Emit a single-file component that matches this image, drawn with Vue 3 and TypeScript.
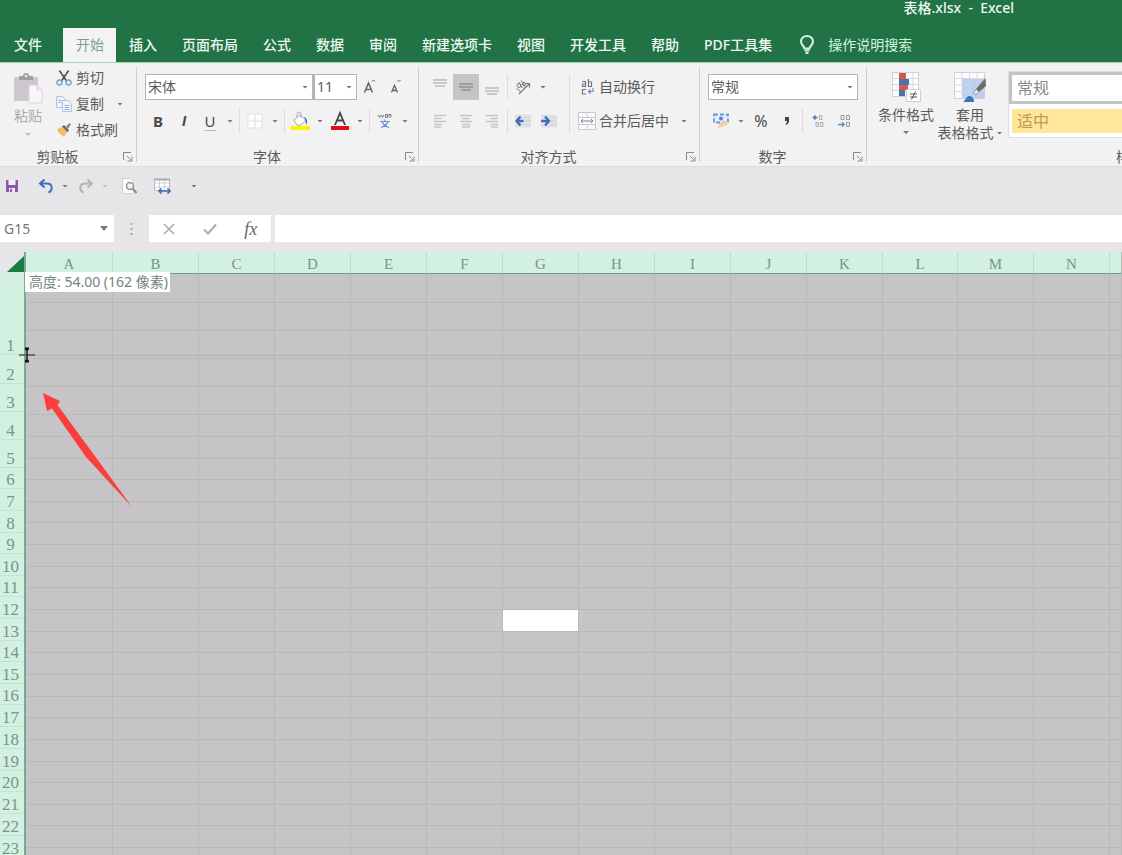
<script setup lang="ts">
import { ref } from 'vue'

const tabs: string[] = ['文件', '开始', '插入', '页面布局', '公式', '数据', '审阅', '新建选项卡', '视图', '开发工具', '帮助', 'PDF工具集']
const activeTab = ref('开始')
const fontName = ref('宋体')
const fontSize = ref('11')
const numberFormat = ref('常规')
const cellRef = ref('G15')
const formula = ref('')

interface Column { name: string; width: number }
const columnWidths: number[] = [87, 86, 76, 76, 76, 76, 76, 76, 76, 76, 76, 75, 76, 76]
const columns: Column[] = columnWidths.map((width, i) => ({ name: String.fromCharCode(65 + i), width }))

const rowHeights: number[] = [29, 28, 28, 28, 28, 22, 22, 21, 22, 21, 22, 22, 21, 22, 22, 21, 22, 22, 21, 22, 22, 21, 22, 21, 22, 22]
const headerHeights: number[] = [82, 29, 28, 28, 28, 21, 22, 22, 21, 22, 21, 22, 22, 21, 22, 21, 22, 22, 22, 21, 22, 22, 22]
const isActive = (row: number, col: number): boolean => row === 14 && col === 6
</script>

<template>
  <div class="window">
    <header class="titlebar">
      <div class="title">表格.xlsx&nbsp; -&nbsp; Excel</div>
      <nav class="tabs">
        <button v-for="t in tabs" :key="t" class="tab" :class="{ active: t === activeTab }" @click="activeTab = t">{{ t }}</button>
        <button class="tell">
          <svg width="16" height="20" viewBox="0 0 16 20" fill="none" stroke="#d3f3df" stroke-width="2">
            <path d="M5.5 13.5c0-2-3.5-3.500-3.500-7a6 5.500 0 0 1 12 0c0 3.500-3.500 5-3.500 7z" />
            <path d="M5.500 15.500h5M6.500 18h3" />
          </svg>
          <span>操作说明搜索</span>
        </button>
      </nav>
    </header>

    <section class="ribbon">
      <div class="group">
        <div class="group-body clip-body">
          <button class="big paste">
            <svg width="32" height="32" viewBox="0 0 32 32">
              <path d="M2 5h24v24H2z" fill="#cdc7ce" />
              <path d="M7 4h4a3 3 0 0 1 6 0h4v4H7z" fill="#a29da2" />
              <circle cx="14" cy="4" r="1.300" fill="#eee" />
              <path d="M17 13h8l5 5v13H17z" fill="#faf4fb" stroke="#dccfe0" />
              <path d="M25 13v5h5" fill="#efe4f1" stroke="#dccfe0" />
            </svg>
            <span>粘贴</span>
            <i class="caret light"></i>
          </button>
          <div class="clip-list">
            <button class="line">
              <svg width="16" height="16" viewBox="0 0 16 16" fill="none">
                <path d="M3.500 0.500 10.500 11M12.500 0.500 5.500 11" stroke="#555" stroke-width="1.700" />
                <circle cx="3.500" cy="12.500" r="2.500" stroke="#7fa3d6" stroke-width="1.500" />
                <circle cx="12.500" cy="12.500" r="2.500" stroke="#7fa3d6" stroke-width="1.500" />
              </svg>
              <span>剪切</span>
            </button>
            <button class="line">
              <svg width="16" height="16" viewBox="0 0 16 16" fill="#eef2fb" stroke="#b4c3e4">
                <path d="M.5.5h6l2.500 2.500v8.500H.5z" />
                <path d="M6.500 4.500h6l3 3v8h-9z" />
                <path d="M2.500 4.500h3M2.500 6.500h3M8.500 9.500h5M8.500 11.500h5M8.500 13.500h5" stroke="#9cb3de" />
              </svg>
              <span>复制</span>
              <i class="caret copy-caret"></i>
            </button>
            <button class="line">
              <svg width="16" height="16" viewBox="0 0 16 16">
                <path d="M1 7l5-2 5 5-3 5c-3-2-6-4-7-8z" fill="#f3bd63" />
                <path d="M6 4.500 8 3l5 5-1.500 2.500z" fill="#6f6a68" />
                <path d="M10 4.500 13.500 1 15 2.500 12 6.500z" fill="#8a8583" />
              </svg>
              <span>格式刷</span>
            </button>
          </div>
        </div>
        <footer class="group-foot"><span>剪贴板</span><button class="launch" aria-label="剪贴板选项"><svg width="10" height="10" viewBox="0 0 10 10" fill="none" stroke="#8a8a8a"><path d="M.5 8V.5H8M4 4l4.500 4.500M9 4.500V9H4.500" /></svg></button></footer>
      </div>

      <div class="group">
        <div class="group-body stack">
          <div class="row">
            <label class="combo font-name"><select v-model="fontName" aria-label="字体"><option>宋体</option></select><i class="caret"></i></label>
            <label class="combo font-size"><select v-model="fontSize" aria-label="字号"><option>11</option></select><i class="caret"></i></label>
            <button class="ic" aria-label="增大字号">
              <svg width="16" height="18" viewBox="0 0 16 18" fill="none" stroke="#666"><path d="M2.500 14.500 6.500 5l4 9.500M4 11.500h5" stroke-width="1.500" /><path d="M10 3.500 11.500 2 13 3.500" /></svg>
            </button>
            <button class="ic" aria-label="减小字号">
              <svg width="16" height="18" viewBox="0 0 16 18" fill="none" stroke="#666"><path d="M3.500 14.500 6.500 7.500l3 7M4.500 12.500h4" stroke-width="1.300" /><path d="M9.500 2 11 3.500 12.500 2" /></svg>
            </button>
          </div>
          <div class="row">
            <button class="ic glyph bold">B</button>
            <button class="ic glyph italic">I</button>
            <button class="ic glyph under">U</button>
            <button class="drop" aria-label="下划线选项"><i class="caret"></i></button>
            <i class="sep"></i>
            <button class="ic" aria-label="边框">
              <svg width="16" height="16" viewBox="0 0 16 16"><path d="M1 1h14v14H1z" fill="#fefefe" stroke="#e2e2e2" /><path d="M8 1v14M1 8h14" stroke="#dcdcdc" /></svg>
            </button>
            <button class="drop" aria-label="边框选项"><i class="caret"></i></button>
            <i class="sep"></i>
            <button class="ic" aria-label="填充颜色">
              <svg width="20" height="20" viewBox="0 0 20 20"><path d="M1 15h19v4H1z" fill="#fff200" /><path d="M4 9l6-5 6 5-5 5H7z" fill="#fff" stroke="#aaa" /><path d="M7 7V3a2 2 0 0 1 4 0v4" fill="none" stroke="#aaa" /><path d="M14 6c3 1 4 4 2.500 8-1-2-1-5-2.500-8z" fill="#5876a4" /></svg>
            </button>
            <button class="drop" aria-label="填充颜色选项"><i class="caret"></i></button>
            <button class="ic" aria-label="字体颜色">
              <svg width="20" height="20" viewBox="0 0 20 20"><path d="M1 15h18v4H1z" fill="#e0101a" /><path d="M5 14 10 2l5 12M7 9.500h6" fill="none" stroke="#444" stroke-width="1.800" /></svg>
            </button>
            <button class="drop" aria-label="字体颜色选项"><i class="caret"></i></button>
            <i class="sep"></i>
            <button class="ic" aria-label="拼音指南">
              <svg width="16" height="16" viewBox="0 0 16 16" fill="none"><path d="M1 2l1.500 2.500L4 2l1.500 2.500L7 2M8.500 4.500V1.500h2v3h-2M12 4.500v-3h2v3" stroke="#777" /><path d="M3 8.500h10M8 6.500v2M5 8.500c1 3 4 5 7 6M11 8.500c-1 3-4 5-7 6" stroke="#6b8fd0" stroke-width="1.200" /></svg>
            </button>
            <button class="drop" aria-label="拼音选项"><i class="caret"></i></button>
          </div>
        </div>
        <footer class="group-foot"><span>字体</span><button class="launch" aria-label="字体选项"><svg width="10" height="10" viewBox="0 0 10 10" fill="none" stroke="#8a8a8a"><path d="M.5 8V.5H8M4 4l4.500 4.500M9 4.500V9H4.500" /></svg></button></footer>
      </div>

      <div class="group">
        <div class="group-body align-body">
          <div class="stack align-left">
            <div class="row">
              <button class="ic" aria-label="顶端对齐"><svg width="14" height="16" viewBox="0 0 14 16" stroke="#c8c8c8" stroke-width="2"><path d="M0 1h14M0 4h14M2 7h10" /></svg></button>
              <button class="ic pressed" aria-label="垂直居中"><svg width="14" height="16" viewBox="0 0 14 16" stroke="#9d9d9d" stroke-width="2"><path d="M0 5h14M0 8h14M2 11h10" /></svg></button>
              <button class="ic" aria-label="底端对齐"><svg width="14" height="16" viewBox="0 0 14 16" stroke="#c8c8c8" stroke-width="2"><path d="M0 9h14M0 12h14M2 15h10" /></svg></button>
              <i class="sep"></i>
              <button class="ic" aria-label="方向"><svg width="16" height="16" viewBox="0 0 16 16" fill="none" stroke="#777"><path d="M4 15 14 5M10.500 4.500h4v4" stroke-width="1.200" /><circle cx="4" cy="6.500" r="2" /><path d="M3.500 3 7.500 9M6 1.500l4.500 7M1.500 9.500l4 3" /><circle cx="9" cy="5" r="1.500" /></svg></button>
              <button class="drop" aria-label="方向选项"><i class="caret"></i></button>
            </div>
            <div class="row">
              <button class="ic" aria-label="左对齐"><svg width="14" height="14" viewBox="0 0 14 14" stroke="#c6c6c6" stroke-width="1.500"><path d="M1 1.500h12M1 4.500h8M1 7.500h12M1 10.500h8M1 13h7" /></svg></button>
              <button class="ic" aria-label="居中"><svg width="14" height="14" viewBox="0 0 14 14" stroke="#c6c6c6" stroke-width="1.500"><path d="M1 1.500h12M3 4.500h8M1 7.500h12M3 10.500h8M3 13h8" /></svg></button>
              <button class="ic" aria-label="右对齐"><svg width="14" height="14" viewBox="0 0 14 14" stroke="#c6c6c6" stroke-width="1.500"><path d="M1 1.500h12M5 4.500h8M1 7.500h12M5 10.500h8M6 13h7" /></svg></button>
              <i class="sep"></i>
              <button class="ic" aria-label="减少缩进"><svg width="16" height="14" viewBox="0 0 16 14"><path d="M0 .5h16v13H0z" fill="#e0e1e6" /><path d="M9 3.500h7M9 7h7M9 10.500h7" stroke="#d3d4da" /><path d="M5.500 2.500 1.500 7l4 4.500M1.500 7h7" fill="none" stroke="#3b6fb8" stroke-width="2.400" /></svg></button>
              <button class="ic" aria-label="增加缩进"><svg width="16" height="14" viewBox="0 0 16 14"><path d="M0 .5h16v13H0z" fill="#e0e1e6" /><path d="M9 3.500h7M9 7h7M9 10.500h7" stroke="#d3d4da" /><path d="M4 2.500 8 7l-4 4.500M0 7h8" fill="none" stroke="#3b6fb8" stroke-width="2.400" /></svg></button>
            </div>
          </div>
          <i class="tall-sep"></i>
          <div class="stack">
            <button class="line wrap-line">
              <svg width="18" height="16" viewBox="0 0 18 16" fill="none" stroke="#777" stroke-width="1.200"><path d="M4 2.500h3.500v5H4.500v-2.500h3M10.500 0v7.500h3v-4.500h-3" /><path d="M8 10.500H4.500v4.500H8" /><path d="M15 9v3.500h-4.500M12.500 10.500l-2 2 2 2" stroke="#6c8fd4" /></svg>
              <span>自动换行</span>
            </button>
            <button class="line wrap-line">
              <svg width="18" height="18" viewBox="0 0 18 18" fill="none"><path d="M.5.5h17v17H.5zM.5 5.500h17M.5 12.500h17M9 .5v5M9 12.500v5" fill="#fbfbfb" stroke="#c9c9cc" /><path d="M3 9h12M5 7 3 9l2 2M13 7l2 2-2 2" stroke="#6d83a8" /></svg>
              <span>合并后居中</span>
              <i class="caret merge-caret"></i>
            </button>
          </div>
        </div>
        <footer class="group-foot"><span>对齐方式</span><button class="launch" aria-label="对齐选项"><svg width="10" height="10" viewBox="0 0 10 10" fill="none" stroke="#8a8a8a"><path d="M.5 8V.5H8M4 4l4.500 4.500M9 4.500V9H4.500" /></svg></button></footer>
      </div>

      <div class="group">
        <div class="group-body stack">
          <div class="row">
            <label class="combo number"><select v-model="numberFormat" aria-label="数字格式"><option>常规</option></select><i class="caret"></i></label>
          </div>
          <div class="row">
            <button class="ic" aria-label="会计数字格式"><svg width="16" height="16" viewBox="0 0 16 16"><path d="M1 1.500h14v8H1z" fill="#e6edfa" stroke="#6f95d8" stroke-width="1.800" stroke-dasharray="4 2" /><circle cx="8" cy="5.500" r="2" fill="#5b80c4" /><path d="M6 11c2-2 6-3 9-2l-1 3c-3 0-5 3-9 3z" fill="#f4d0a0" /></svg></button>
            <button class="drop" aria-label="货币选项"><i class="caret"></i></button>
            <button class="ic glyph percent">%</button>
            <button class="ic" aria-label="千位分隔"><svg width="8" height="10" viewBox="0 0 8 10"><path d="M2 1h4v4c0 2-1.500 3.500-3 4L2.500 8c1-.5 1.500-1.500 1.500-3H2z" fill="#444" /></svg></button>
            <i class="sep"></i>
            <button class="ic" aria-label="增加小数位数"><svg width="14" height="14" viewBox="0 0 14 14" fill="none"><path d="M6.500 3.500H2M4.500 1.500l-2 2 2 2" stroke="#4f78c4" stroke-width="1.500" /><path d="M8.500 1.500h2.500v4H8.500zM5 8.500h2.500v4H5zM9.500 8.500H12v4H9.500z" stroke="#aaa" /></svg></button>
            <button class="ic" aria-label="减少小数位数"><svg width="14" height="14" viewBox="0 0 14 14" fill="none"><path d="M4 1.500h3v4H4zM9.500 1.500h3v4h-3zM9.500 8.500h3v4h-3z" stroke="#999" /><path d="M1 10.500h6M5 8.500l2 2-2 2" stroke="#5b8fc4" stroke-width="1.500" /></svg></button>
          </div>
        </div>
        <footer class="group-foot"><span>数字</span><button class="launch" aria-label="数字选项"><svg width="10" height="10" viewBox="0 0 10 10" fill="none" stroke="#8a8a8a"><path d="M.5 8V.5H8M4 4l4.500 4.500M9 4.500V9H4.500" /></svg></button></footer>
      </div>

      <div class="group styles">
        <div class="group-body styles-body">
          <button class="big cond">
            <svg width="30" height="32" viewBox="0 0 30 32">
              <path d="M1.500 1.500h26v24h-26z" fill="#fdfdfd" stroke="#cfcfd2" />
              <path d="M1.500 7.500h26M1.500 13.500h26M1.500 19.500h26M22 1.500v24" stroke="#d9d9dc" />
              <path d="M8 2h7v6H8zM8 14h9v5H8z" fill="#d25a4a" />
              <path d="M8 8h10v6H8zM8 19h6v6H8z" fill="#4b74ad" />
              <path d="M15.500 18.500h14v12h-14z" fill="#fff" stroke="#cfcfcf" />
              <path d="M19 23h7M19 26h7M24.500 20.500l-4 8" stroke="#555" />
            </svg>
            <span>条件格式</span>
            <i class="caret"></i>
          </button>
          <button class="big table-fmt">
            <svg width="34" height="32" viewBox="0 0 34 32">
              <path d="M1.500 1.500h30v26h-30z" fill="#fdfdfd" stroke="#cfcfd2" />
              <path d="M9 7h22v20H9z" fill="#bccfec" />
              <path d="M1.500 7.500h30M9 1.500v26M16.500 1.500v6M24 1.500v6M1.500 14H9M1.500 20.500H9" stroke="#d5dae6" />
              <path d="M9 14h22M9 20.500h22M16.500 7v20M24 7v20" stroke="#c9d7ee" />
              <path d="M32.500 7l.5 8-7 6-3-3z" fill="#6c6c70" />
              <path d="M23 18l3 3-3 3-3-2z" fill="#e6e2df" stroke="#999" />
              <path d="M10 31c2-1 3-5 6-6 3 0 5 2 5 6z" fill="#3f73b7" />
            </svg>
            <span>套用</span>
            <span class="with-caret">表格格式<i class="caret"></i></span>
          </button>
          <div class="gallery">
            <button class="style normal">常规</button>
            <button class="style neutral">适中</button>
          </div>
        </div>
        <footer class="group-foot"><span>样式</span><i class="launch"></i></footer>
      </div>
    </section>

    <section class="quick">
      <button class="qb" aria-label="保存"><svg width="14" height="14" viewBox="0 0 14 14"><path d="M1 1h12v12H1z" fill="#8b5aa8" /><path d="M3.500 1h7v5h-7z" fill="#f4eef7" /><path d="M4 9h6v4H4z" fill="#eee6f3" /><path d="M5 10h2v3H5z" fill="#8b5aa8" /></svg></button>
      <div class="row">
        <button class="qb" aria-label="撤消"><svg width="16" height="16" viewBox="0 0 16 16" fill="none" stroke="#3f6fb5" stroke-width="2"><path d="M6.500 1.500 2 5.500l4.500 4M2.500 5.500H9c6 0 6 7 1.500 9" /></svg></button>
        <button class="drop" aria-label="撤消列表"><i class="caret"></i></button>
      </div>
      <div class="row">
        <button class="qb" aria-label="恢复"><svg width="16" height="16" viewBox="0 0 16 16" fill="none" stroke="#b3b3b8" stroke-width="2"><path d="M9.500 1.500 14 5.500l-4.500 4M13.500 5.500H7c-6 0-6 7-1.500 9" /></svg></button>
        <button class="drop" aria-label="恢复列表"><i class="caret light"></i></button>
      </div>
      <button class="qb" aria-label="打印预览"><svg width="16" height="16" viewBox="0 0 16 16" fill="none"><path d="M1.500.5h8l3 3v12h-11z" fill="#fdfdfd" stroke="#cfcfd3" /><circle cx="9" cy="8" r="3.500" fill="#f1f1f4" stroke="#96969c" stroke-width="1.500" /><path d="M11.500 10.500l4 4.500" stroke="#8a8a90" stroke-width="2" /></svg></button>
      <button class="qb" aria-label="列宽"><svg width="18" height="16" viewBox="0 0 18 16" fill="none"><path d="M1.500 1.500h15v11h-15z" fill="#fff" stroke="#b9b9be" /><path d="M2 5h14M2 9h14M6.500 2v10M11.500 2v10" stroke="#d0d0d5" /><path d="M1 1.500h16" stroke="#a8a8ad" stroke-width="2" /><path d="M6 13h11M8.500 10.500 6 13l2.500 2.500M14.500 10.500 17 13l-2.500 2.500" stroke="#3f6fb5" stroke-width="1.600" /></svg></button>
      <button class="drop" aria-label="自定义快速访问工具栏"><i class="caret"></i></button>
    </section>

    <section class="formula">
      <div class="name-box">
        <input v-model="cellRef" aria-label="名称框" />
        <button class="name-drop" aria-label="名称列表"><svg width="8" height="5" viewBox="0 0 8 5"><path d="M0 0h8L4 5z" fill="#777" /></svg></button>
      </div>
      <div class="dots"><svg width="3" height="14" viewBox="0 0 3 14" fill="#a6a6aa"><path d="M.5 1h2v2h-2zM.5 6h2v2h-2zM.5 11h2v2h-2z" /></svg></div>
      <div class="fx-box">
        <button aria-label="取消"><svg width="12" height="12" viewBox="0 0 12 12" stroke="#ababaf" stroke-width="1.600"><path d="M1 1l10 10M11 1 1 11" /></svg></button>
        <button aria-label="输入"><svg width="14" height="12" viewBox="0 0 14 12" fill="none" stroke="#ababaf" stroke-width="2"><path d="M1 6.500 5 10.500 13 1.500" /></svg></button>
        <button class="fx">fx</button>
      </div>
      <input v-model="formula" class="formula-input" aria-label="编辑栏" />
    </section>

    <main class="sheet">
      <div class="side">
        <button class="corner" aria-label="全选"><svg width="17" height="16" viewBox="0 0 17 16"><path d="M17 0v16H0z" fill="#1b7a45" /></svg></button>
        <ol class="row-heads">
          <li v-for="(h, i) in headerHeights" :key="i" :style="{ height: h + 'px' }">{{ i + 1 }}</li>
        </ol>
      </div>
      <div class="cells">
        <table>
          <colgroup><col v-for="c in columns" :key="c.name" :style="{ width: c.width + 'px' }" /><col class="rest" /></colgroup>
          <thead><tr><th v-for="c in columns" :key="c.name" scope="col">{{ c.name }}</th><td class="head-rest"></td></tr></thead>
          <tbody>
            <tr v-for="(h, r) in rowHeights" :key="r" :style="{ height: h + 'px' }">
              <td v-for="(c, k) in columns" :key="c.name" :class="{ current: isActive(r, k) }"></td><td></td>
            </tr>
          </tbody>
        </table>
      </div>
      <div class="guide"></div>
      <div class="tip">高度: 54.00 (162 像素)</div>
      <svg class="cursor" width="16" height="18" viewBox="0 0 16 18"><path d="M0 9h16" stroke="#555" stroke-width="1.500" /><path d="M8 2v14" stroke="#222" stroke-width="1.500" /><path d="M6 1.500h4v2L8 5 6 3.500zM6 16.500h4v-2L8 13l-2 1.500z" fill="#111" /></svg>
      <svg class="arrow" width="92" height="116" viewBox="0 0 92 116"><path d="M1 0l17 8-2.500 4 42.500 58 32 44-46-50L10 15.500 5 18z" fill="#fb3e3c" /></svg>
    </main>
  </div>
</template>

<style>
body { margin: 0; }
</style>

<style scoped>
.window {
  height: 100vh;
  display: flex;
  flex-direction: column;
  overflow: hidden;
  background: #e6e6e8;
  color: #5c5c5c;
  font: 14px/20px "Noto Sans", "Noto Sans CJK SC", sans-serif;
}
.window * { box-sizing: border-box; }
button, input, select { font: inherit; color: inherit; border: 0; padding: 0; margin: 0; background: none; border-radius: 0; }
button { display: flex; align-items: center; justify-content: center; white-space: nowrap; }
svg { display: block; flex: none; }
i { font-style: normal; }

.titlebar { background: #217346; color: #eef8f1; }
.title { height: 28px; line-height: 16px; padding-right: 108px; text-align: right; font-weight: 500; }
.tabs { display: flex; height: 34px; }
.tab { padding: 0 12px 0 13px; font-weight: 500; }
.tab:first-child { padding: 0 21px 0 14px; }
.tab.active { background: #f3f3f3; color: #7f9e8c; font-weight: 400; }
.tell { padding-left: 15px; gap: 13px; color: #d3f3df; }

.ribbon {
  display: grid;
  grid-template-columns: 137px 282px 281px 167px 1fr;
  height: 105px;
  flex: none;
  overflow: hidden;
  background: #f2f2f2;
  border-top: 1px solid #a5cfb5;
  border-bottom: 1px solid #dcdcde;
}
.group { position: relative; display: flex; flex-direction: column; justify-content: space-between; }
.group:not(.styles)::after { content: ""; position: absolute; right: 0; top: 4px; bottom: 4px; width: 1px; background: #cfcfd1; }
.group-body { padding: 11px 8px 0; }
.group-foot { display: flex; align-items: center; text-align: center; line-height: 18px; }
.group-foot span { flex: 1; }
.launch { width: 22px; height: 18px; justify-content: flex-end; padding-right: 4px; }
.stack { display: flex; flex-direction: column; gap: 8px; }
.row { display: flex; align-items: center; }
.stack .row { height: 26px; }
.caret { display: block; flex: none; width: 6px; height: 3px; background: #777; clip-path: polygon(0 0, 100% 0, 50% 100%); }
.caret.light { background: #bbb; }

.clip-body { display: flex; padding: 2px 0 0; }
.big { flex-direction: column; justify-content: flex-start; line-height: 18px; }
.big .caret { margin-top: 6px; }
.paste { width: 56px; padding-top: 7px; color: #aaa; gap: 3px; }
.paste .caret { margin-top: 5px; }
.line { gap: 4px; height: 26px; justify-content: flex-start; }
.copy-caret, .merge-caret { margin-left: 9px; }

.combo { display: flex; align-items: center; height: 26px; background: #fff; border: 1px solid #b4b4b6; padding-right: 4px; }
.combo select { flex: 1; min-width: 0; height: 24px; appearance: none; padding-left: 2px; outline: 0; }
.font-name { width: 168px; }
.font-size { width: 44px; border-left-width: 2px; }
.number { width: 150px; }
.ic { width: 26px; height: 26px; flex: none; }
.drop { width: 14px; height: 26px; flex: none; }
.pressed { background: #c5c5c6; }
.sep { width: 1px; height: 24px; margin: 0 2px; background: #dcdcde; flex: none; }
.glyph { font-size: 15px; color: #4a4a4a; }
.bold { font-weight: 700; }
.italic { font-family: "Liberation Sans", sans-serif; font-style: italic; font-weight: 700; }
.under { text-decoration: underline #b5b5b5; text-underline-offset: 3px; }
.percent { font-size: 16px; }
.align-body { display: flex; }
.align-left { width: 142px; }
.tall-sep { width: 1px; background: #dcdcde; margin-right: 8px; }
.wrap-line { gap: 3px; }

.styles { min-width: 548px; }
.styles-body { display: flex; padding: 8px 0 0 8px; }
.cond { width: 62px; gap: 3px; }
.cond .caret { margin-top: 4px; }
.table-fmt { width: 66px; }
.table-fmt svg { margin-bottom: 3px; }
.with-caret { display: flex; align-items: center; gap: 3px; }
.with-caret .caret { margin: 0; }
.gallery { flex: 1; margin-left: 5px; background: #fff; border: 1px solid #dedee0; height: 67px; display: flex; flex-direction: column; gap: 5px; }
.style { justify-content: flex-start; font-size: 16px; width: 100%; }
.normal { height: 32px; border: 3px solid #c3c3c4; padding-left: 5px; color: #8a8a8a; }
.neutral { height: 24px; margin-left: 3px; padding-left: 5px; background: #ffe799; color: #bd9a4c; }

.quick { display: grid; grid-template-columns: 34px 40px 43px 33px 37px 14px; align-items: center; height: 38px; margin-bottom: 10px; flex: none; }
.qb { width: 24px; height: 24px; }

.formula { display: grid; grid-template-columns: 114px 35px 122px 1fr; height: 27px; flex: none; margin-bottom: 10px; }
.name-box { display: flex; background: #fff; }
.name-box input { flex: 1; min-width: 0; padding-left: 4px; outline: 0; color: #777; }
.name-drop { width: 20px; }
.dots { display: flex; align-items: center; justify-content: center; }
.fx-box { display: grid; grid-template-columns: repeat(3, 1fr); background: #fff; }
.fx { font: italic 18px/20px "Liberation Serif", serif; color: #666; }
.formula-input { background: #fff; margin-left: 4px; outline: 0; min-width: 0; }

.sheet { position: relative; flex: 1; min-height: 0; display: flex; overflow: hidden; }
.side { flex: none; width: 26px; border-right: 2px solid #7fa894; background: #d2f1e0; }
.corner { width: 24px; height: 21px; background: #e6e6e8; align-items: flex-end; justify-content: flex-end; padding-bottom: 1px; }
.row-heads { list-style: none; margin: 0; padding: 0; }
.row-heads li {
  display: flex;
  align-items: flex-end;
  justify-content: center;
  padding-right: 3px;
  border-bottom: 1px solid #c4e5d3;
  color: #78958a;
  font: 17px/16px "Liberation Serif", serif;
}
.cells { flex: 1; min-width: 0; overflow: hidden; background: #c6c4c7; }
table { table-layout: fixed; width: 100%; border-collapse: separate; border-spacing: 0; }
th {
  height: 22px;
  padding: 4px 0 0;
  background: #d2f1e0;
  border-right: 1px solid #bfdccc;
  border-bottom: 1px solid #6f9c86;
  color: #78958a;
  font: 15px/17px "Liberation Serif", serif;
}
td { padding: 0; border-right: 1px solid #b8bab9; border-bottom: 1px solid #b8bab9; }
td.head-rest { background: #d2f1e0; border-bottom-color: #6f9c86; }
td.current { background: #fff; }
.guide { position: absolute; left: 26px; right: 0; top: 103px; height: 1px; background: #b0b3b2; }
.tip { position: absolute; left: 25px; top: 20px; padding: 0 2px 0 4px; background: #fff; color: #71877b; white-space: nowrap; }
.cursor { position: absolute; left: 19px; top: 94px; }
.arrow { position: absolute; left: 42px; top: 141px; }
</style>
